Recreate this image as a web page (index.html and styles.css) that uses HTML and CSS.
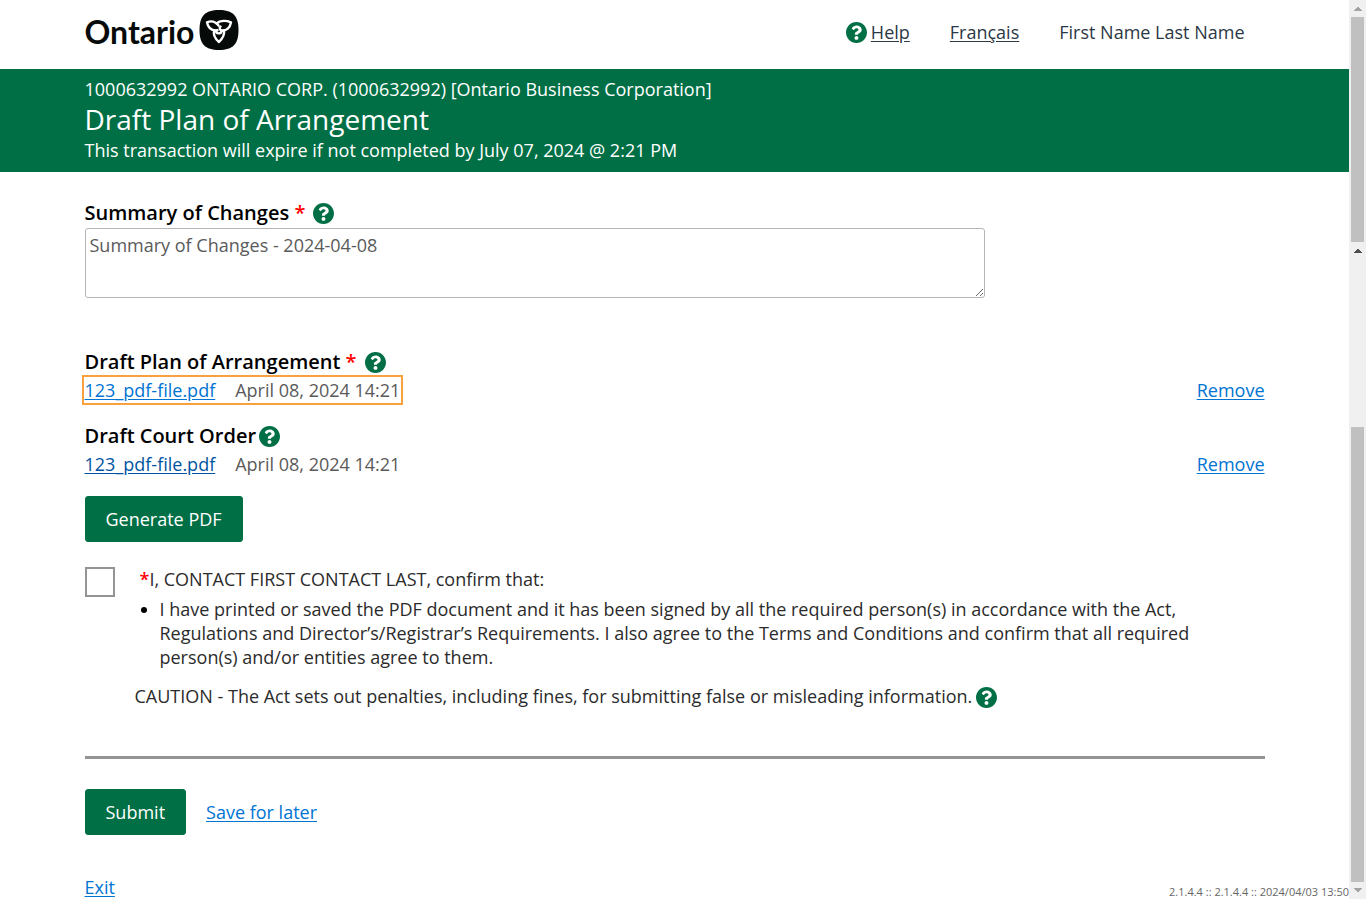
FILE: index.html
```html
<!DOCTYPE html>
<html lang="en">
<head>
<meta charset="utf-8">
<meta name="viewport" content="width=device-width, initial-scale=1">
<title>Draft Plan of Arrangement</title>
<link rel="stylesheet" href="styles.css">
</head>
<body>
<svg class="sprite" aria-hidden="true">
  <symbol id="question" viewBox="8 8 496 496"><path d="M504 256c0 136.997-111.043 248-248 248S8 392.997 8 256C8 119.083 119.043 8 256 8s248 111.083 248 248zM262.655 90c-54.497 0-89.255 22.957-116.549 63.758-3.536 5.286-2.353 12.415 2.715 16.258l34.699 26.31c5.205 3.947 12.621 3.008 16.665-2.122 17.864-22.658 30.113-35.797 57.303-35.797 20.429 0 45.698 13.148 45.698 32.958 0 14.976-12.363 22.667-32.534 33.976C247.128 238.528 216 254.941 216 296v4c0 6.627 5.373 12 12 12h56c6.627 0 12-5.373 12-12v-1.333c0-28.462 83.186-29.647 83.186-106.667 0-58.002-60.165-102-116.531-102zM256 338c-25.365 0-46 20.635-46 46 0 25.364 20.635 46 46 46s46-20.636 46-46c0-25.365-20.635-46-46-46z"/></symbol>
</svg>
<div class="window">
  <div class="page">
    <header class="header container">
      <div class="logo">
        <span>Ontario</span>
        <svg class="trillium" viewBox="0 0 40 40" aria-hidden="true">
          <path fill="#060a09" d="M20 0C34 0 39.500 6 39.500 20S34 40 20 40 .5 34 .5 20 6 0 20 0Z"/>
          <g fill="none" stroke="#fff" stroke-width="2.400" stroke-linejoin="round" stroke-linecap="round">
            <path d="M18.500 20.300C12 21 9 18 8 12.300C12 10.600 16.500 11.500 19.500 15.500"/>
            <path d="M17.500 13.500C21 10.500 27 10.300 32 12.300C31 18 27.500 21 23 20.500C20.500 20.200 20 17.800 21.500 16.500"/>
            <path d="M25 20.500C26 25.500 23 29 20 32C16 28.500 13.800 24.500 15.300 20.500"/>
            <path d="M17 20.500C17 24 21.500 24.500 22.800 21"/>
          </g>
        </svg>
      </div>
      <nav class="nav">
        <a class="help-link" href="#"><svg class="icon"><use href="#question"/></svg><span>Help</span></a>
        <a href="#">Français</a>
        <span>First Name Last Name</span>
      </nav>
    </header>
    <div class="banner">
      <div class="container">
        <p>1000632992 ONTARIO CORP. (1000632992) [Ontario Business Corporation]</p>
        <h1>Draft Plan of Arrangement</h1>
        <p>This transaction will expire if not completed by July 07, 2024 @ 2:21 PM</p>
      </div>
    </div>
    <main class="main container">
      <section class="summary">
        <div class="label-row wide"><label for="summary">Summary of Changes <span class="required">*</span></label><button class="tip" aria-label="Help"><svg class="icon"><use href="#question"/></svg></button></div>
        <textarea id="summary">Summary of Changes - 2024-04-08</textarea>
      </section>
      <section class="document">
        <div class="label-row wide"><h2>Draft Plan of Arrangement <span class="required">*</span></h2><button class="tip" aria-label="Help"><svg class="icon"><use href="#question"/></svg></button></div>
        <div class="file-row">
          <div class="file focused"><a href="#">123_pdf-file.pdf</a><span>April 08, 2024 14:21</span></div>
          <a href="#">Remove</a>
        </div>
      </section>
      <section class="document">
        <div class="label-row"><h2>Draft Court Order</h2><button class="tip" aria-label="Help"><svg class="icon"><use href="#question"/></svg></button></div>
        <div class="file-row">
          <div class="file visited"><a href="#">123_pdf-file.pdf</a><span>April 08, 2024 14:21</span></div>
          <a href="#">Remove</a>
        </div>
      </section>
      <button class="button">Generate PDF</button>
      <section class="confirm">
        <input type="checkbox" id="confirm">
        <div class="terms">
          <label for="confirm"><span class="required">*</span>I, CONTACT FIRST CONTACT LAST, confirm that:</label>
          <ul><li>I have printed or saved the PDF document and it has been signed by all the required person(s) in accordance with the Act, Regulations and Director’s/Registrar’s Requirements. I also agree to the Terms and Conditions and confirm that all required person(s) and/or entities agree to them.</li></ul>
          <div class="caution"><p>CAUTION - The Act sets out penalties, including fines, for submitting false or misleading information.</p><button class="tip" aria-label="Help"><svg class="icon"><use href="#question"/></svg></button></div>
        </div>
      </section>
      <hr>
      <div class="actions"><button class="button">Submit</button><a href="#">Save for later</a></div>
    </main>
    <footer class="footer">
      <a href="#">Exit</a>
      <small>2.1.4.4 :: 2.1.4.4 :: 2024/04/03 13:50</small>
    </footer>
  </div>
  <div class="scrollbar" aria-hidden="true">
    <svg class="arrow" viewBox="0 0 17 17"><path d="M5 11h8v-1h-1v-1h-1v-1h-1v-1h-2v1h-1v1h-1v1h-1z"/></svg>
    <i class="thumb upper"></i>
    <svg class="arrow dark" viewBox="0 0 17 17"><path d="M5 11h8v-1h-1v-1h-1v-1h-1v-1h-2v1h-1v1h-1v1h-1z"/></svg>
    <i class="track"></i>
    <i class="thumb lower"></i>
    <svg class="arrow" viewBox="0 0 17 17"><path d="M5 6h8v1h-1v1h-1v1h-1v1h-2v-1h-1v-1h-1v-1h-1z"/></svg>
  </div>
</div>
</body>
</html>
```
FILE: styles.css
```css
* { box-sizing: border-box; }
body {
  margin: 0;
  font: 400 18px/24px "Open Sans", "Noto Sans", sans-serif;
  color: #2b2b2b;
  background: #fff;
}
h1, h2, p, ul { margin: 0; font-weight: inherit; }
a { color: #0074d3; text-underline-offset: 2px; font-weight: 400; }
button { font: inherit; cursor: pointer; }
.sprite { display: none; }
.window { display: grid; grid-template-columns: minmax(0, 1fr) 17px; min-height: 100vh; }
.page { display: flex; flex-direction: column; }
.container { width: 100%; max-width: 1220px; padding: 0 20px; margin: 0 auto; }
.icon { display: block; width: 21px; height: 21px; fill: #006f45; }

.header { display: flex; justify-content: space-between; align-items: flex-start; height: 69px; }
.logo { display: flex; gap: 4px; padding-top: 10px; font: 700 32px/44px Lato, sans-serif; color: #060a09; }
.trillium { width: 40px; height: 40px; }
.nav { display: flex; gap: 40px; padding: 20px 20px 0; color: #2b3845; }
.nav a { color: inherit; font-weight: inherit; }
.help-link { display: flex; align-items: center; gap: 4px; text-decoration: none; }
.help-link span { text-decoration: underline; text-underline-offset: 2px; }

.banner { padding: 8px 0 10px; color: #fff; background: #006f45; font-weight: 400; }
.banner h1 { font-size: 28px; line-height: 37px; }

.main { padding-top: 28px; }
.label-row { display: flex; align-items: center; gap: 3px; color: #000; font-size: 20px; line-height: 26px; font-weight: 600; }
.label-row h2 { font-size: inherit; }
.wide { gap: 8px; }
.required { color: #f00; font-weight: 600; }
.tip { padding: 0; border: 0; background: none; }
textarea {
  display: block; width: 100%; max-width: 900px; height: 70px; padding: 4px; margin-top: 2px;
  border: 1px solid #b5b5b5; border-radius: 3px; color: #5a5a5a; font: inherit;
}
.summary { margin-bottom: 50px; }
.document { padding-top: 1px; margin-bottom: 17px; }
.file-row { display: flex; justify-content: space-between; line-height: 30px; }
.file { display: flex; gap: 20px; color: #5a5a5a; }
.focused { outline: 2px solid #f9a13f; outline-offset: 1px; }
.focused, .focused + a { line-height: 24px; margin: 3px 0; }
.visited a { color: #00549f; }
.button { height: 46px; padding: 0 20px; border: 1px solid #006f45; border-radius: 3px; color: #fff; background: #006f45; font-weight: 400; }
.confirm { display: flex; gap: 20px; margin-top: 25px; }
.confirm input { appearance: none; flex: none; width: 30px; height: 30px; margin: 0; border: 2px solid #949494; }
.terms { padding-right: 60px; }
.terms label { display: block; padding-left: 5px; margin-bottom: 6px; }
.terms ul { padding-left: 25px; }
.terms li::marker { color: #000; }
.caution { display: flex; align-items: flex-end; gap: 4px; margin-top: 15px; }
hr { height: 3px; margin: 48px 0 30px; border: 0; background: #949494; }
.actions { display: flex; align-items: center; gap: 20px; }
.footer { display: grid; grid-template-columns: 1fr auto; align-items: end; margin-top: auto; padding-left: max(20px, calc(50% - 590px)); }
.footer a { justify-self: start; }
.footer small { font-size: 11px; line-height: 15px; color: #666; font-weight: 400; }

.scrollbar { display: flex; flex-direction: column; height: 100vh; background: #f0f0f0; }
.arrow { flex: none; width: 17px; height: 17px; fill: #a3a3a3; }
.dark { fill: #505050; }
.thumb { margin: 0 2px; background: #c0c0c0; }
.upper { flex: 225; }
.track { flex: 168; }
.lower { flex: 455; }
```
